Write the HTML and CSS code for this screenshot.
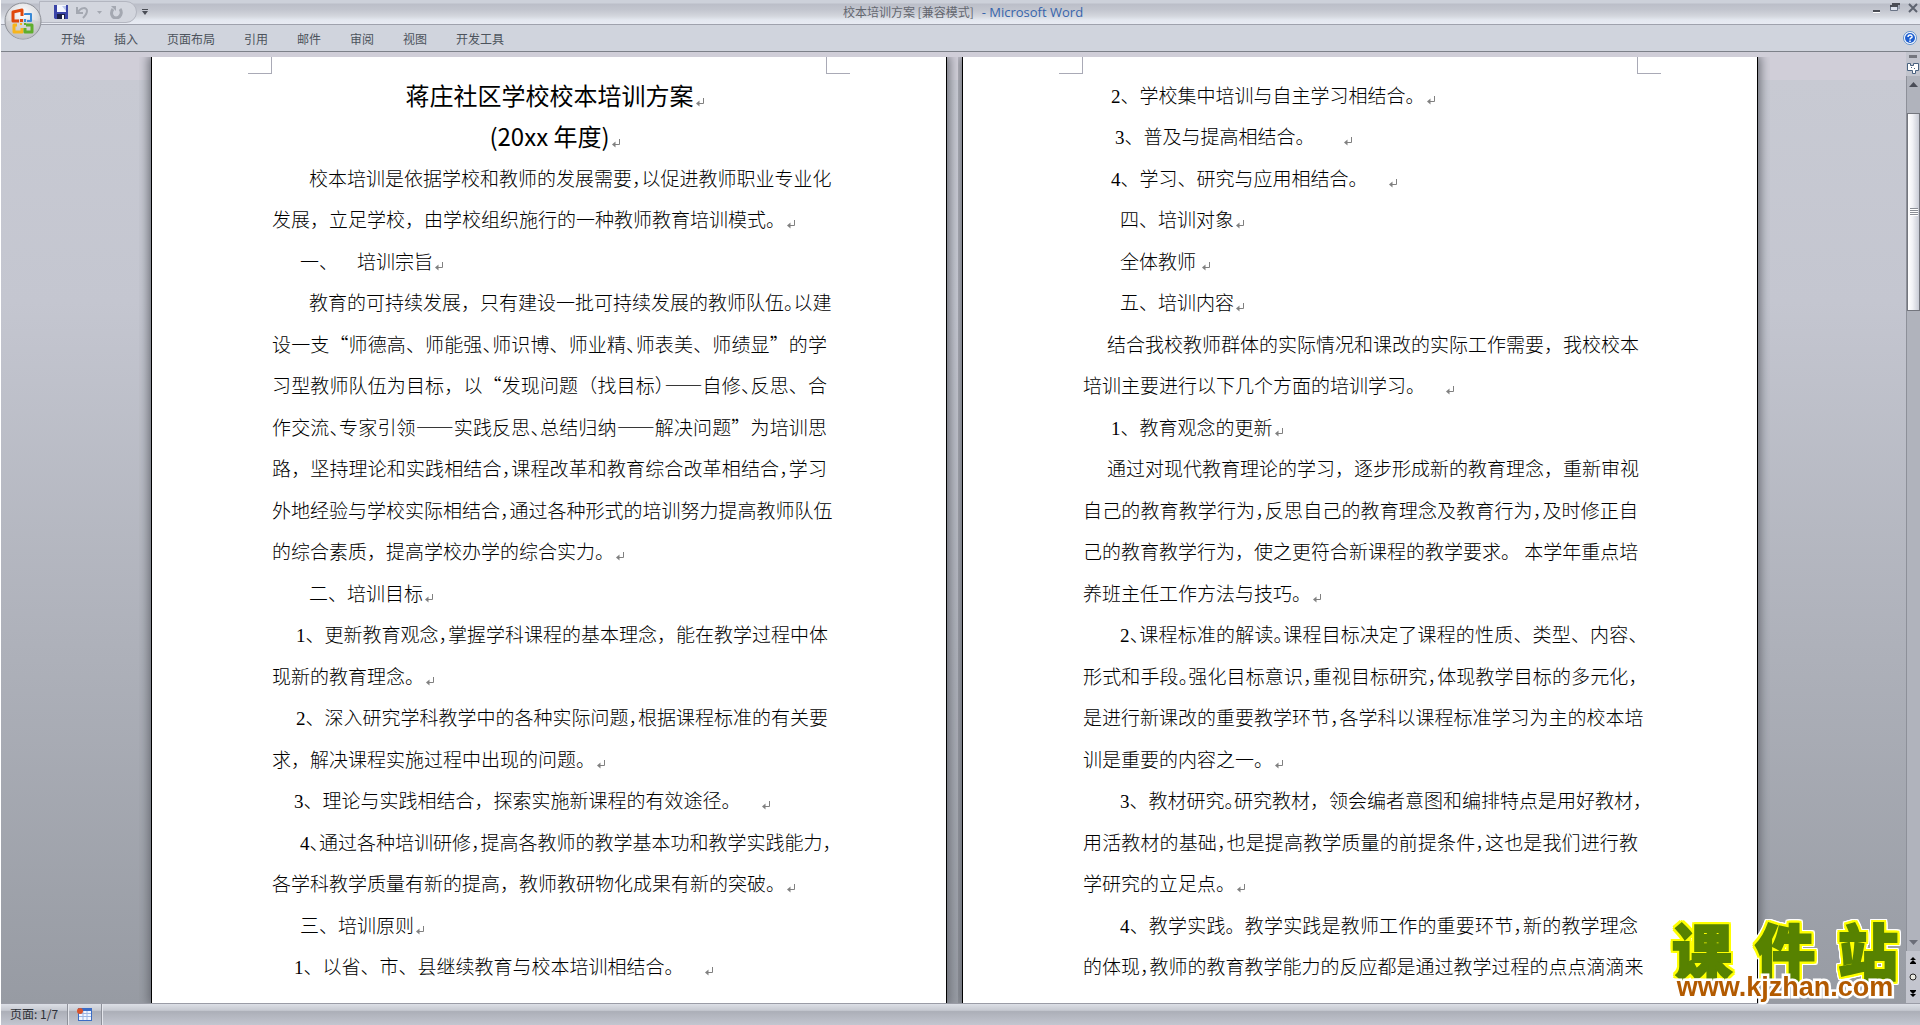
FILE: index.html
```html
<!DOCTYPE html>
<html lang="zh-CN">
<head>
<meta charset="utf-8">
<title>校本培训方案 [兼容模式] - Microsoft Word</title>
<link rel="stylesheet" href="styles.css">
</head>
<body>
<svg class="defs" aria-hidden="true">
  <symbol id="ret" viewBox="0 0 8 9"><path d="M7.500 0v5.500H2" fill="none" stroke="#808080"/><path d="M0 5.500L3.500 2.500v6z" fill="#808080"/></symbol>
</svg>

<header class="titlebar">
  <div class="quick">
    <button aria-label="保存"><svg width="14" height="14" viewBox="0 0 14 14"><path d="M0 0h14v14H1l-1-1z" fill="#3a44a8"/><path d="M3 0h9v7H3z" fill="#f4f7ff"/><path d="M8 1h4v5z" fill="#b9c6ee"/><path d="M3 9h8v5H3z" fill="#1c2047"/><path d="M8 10h2v4H8z" fill="#fff"/></svg></button>
    <button aria-label="撤消"><svg width="13" height="13" viewBox="0 0 13 13"><path d="M1 1v6h6" fill="none" stroke="#a4a8b1" stroke-width="2"/><path d="M2 6c3-5 9-5 9-1 0 3-2 5-4 7" fill="none" stroke="#a4a8b1" stroke-width="2"/></svg></button>
    <button aria-label="撤消列表"><svg width="5" height="3" viewBox="0 0 5 3"><path d="M0 0h5L2.500 3z" fill="#a4a8b1"/></svg></button>
    <button aria-label="重复"><svg width="13" height="13" viewBox="0 0 13 13"><path d="M3 3C0 7 2 12 6 12s7-5 4-9" fill="none" stroke="#a4a8b1" stroke-width="3"/><path d="M1 0h5v5z" fill="#a4a8b1"/></svg></button>
  </div>
  <button class="custom" aria-label="自定义快速访问工具栏"><svg width="6" height="6" viewBox="0 0 6 6"><path d="M0 0h6v1H0zM0 2h6L3 6z" fill="#4a4d55"/></svg></button>
  <h2 class="caption"><span>校本培训方案 [兼容模式]</span><span class="app">- Microsoft Word</span></h2>
  <div class="winbtns">
    <button aria-label="最小化"><svg width="10" height="10" viewBox="0 0 10 10"><path d="M1 7h7v2H1z" fill="#4a4d55"/><path d="M1 9h7v1H1z" fill="#fff"/></svg></button>
    <button aria-label="还原"><svg width="10" height="10" viewBox="0 0 10 10"><path d="M2 1h7v5M.5 3.500h7v4h-7z" fill="#dde3ee" stroke="#6a7486"/><path d="M2 1h8M0 3h8" stroke="#4a4d55" stroke-width="2"/></svg></button>
    <button aria-label="关闭"><svg width="10" height="10" viewBox="0 0 10 10"><path d="M1 1l8 8M9 1L1 9" stroke="#5e6470" stroke-width="2"/></svg></button>
  </div>
</header>
<button class="office" aria-label="Office 按钮"><svg width="38" height="38" viewBox="0 0 38 38">
  <defs><radialGradient id="orb" cx=".5" cy=".3" r=".7"><stop offset="0" stop-color="#fff"/><stop offset=".6" stop-color="#dcdde0"/><stop offset="1" stop-color="#a9abb0"/></radialGradient></defs>
  <circle cx="19" cy="19" r="18" fill="url(#orb)" stroke="#8d9097"/><path d="M2 20c8-4 26-4 34 0a17 17 0 0 1-34 0z" fill="#c9cacd" opacity=".6"/>
  <g fill="none" stroke-width="3" stroke-linejoin="round"><path d="M15 19H9V10l9-2v6" stroke="#e0490d"/><path d="M21 13v-1h6v7h-4" stroke="#3a8ad6" stroke-width="2"/><path d="M13 23h-3v7h8v-4" stroke="#f7b51c"/><path d="M22 23h6v7h-7v-4" stroke="#5fae2c"/></g>
  <path d="M16 17h3v3h-3z" fill="#e0490d"/><path d="M20 17h2v3h-2z" fill="#3a8ad6"/><path d="M16 21h2v2h-2z" fill="#f7b51c"/><path d="M20 21h2v2h-2z" fill="#5fae2c"/>
</svg></button>

<nav class="ribbon">
  <a href="#">开始</a><a href="#">插入</a><a href="#">页面布局</a><a href="#">引用</a><a href="#">邮件</a><a href="#">审阅</a><a href="#">视图</a><a href="#">开发工具</a>
  <button class="help" aria-label="帮助"><svg width="14" height="14" viewBox="0 0 14 14"><circle cx="7" cy="7" r="6.500" fill="#fff" stroke="#5f8fcb"/><circle cx="7" cy="7" r="5" fill="#1f5fd0"/><path d="M5 6c0-3 4.500-2.500 4 0-.3 1-2 1-2 2.500M7 9.500v1.500" fill="none" stroke="#fff" stroke-width="1.500"/></svg></button>
</nav>

<div class="main">
<main class="work">
  <article class="page">
    <i class="crop left"></i><i class="crop right"></i>
    <h1>蒋庄社区学校校本培训方案<svg class="r"><use href="#ret"/></svg></h1>
    <h1>(20xx 年度)<svg class="r"><use href="#ret"/></svg></h1>
    <p class="j in37">校本培训是依据学校和教师的发展需要<i class="h">，</i>以促进教师职业专业化</p>
    <p>发展，立足学校，由学校组织施行的一种教师教育培训模式。<svg class="r"><use href="#ret"/></svg></p>
    <p class="in28">一、　培训宗旨<svg class="r"><use href="#ret"/></svg></p>
    <p class="j in37">教育的可持续发展，只有建设一批可持续发展的教师队伍<i class="h">。</i>以建</p>
    <p class="j">设一支“师德高、师能强<i class="h">、</i>师识博、师业精<i class="h">、</i>师表美、师绩显”的学</p>
    <p class="j">习型教师队伍为目标，以“发现问题（找目标<i class="h">）</i>——自修<i class="h">、</i>反思、合</p>
    <p class="j">作交流<i class="h">、</i>专家引领——实践反思<i class="h">、</i>总结归纳——解决问题”为培训思</p>
    <p class="j">路，坚持理论和实践相结合<i class="h">，</i>课程改革和教育综合改革相结合<i class="h">，</i>学习</p>
    <p class="j">外地经验与学校实际相结合<i class="h">，</i>通过各种形式的培训努力提高教师队伍</p>
    <p>的综合素质，提高学校办学的综合实力。<svg class="r"><use href="#ret"/></svg></p>
    <p class="in37">二、培训目标<svg class="r"><use href="#ret"/></svg></p>
    <p class="j in24"><b>1</b>、更新教育观念<i class="h">，</i>掌握学科课程的基本理念，能在教学过程中体</p>
    <p>现新的教育理念。<svg class="r"><use href="#ret"/></svg></p>
    <p class="j in24"><b>2</b>、深入研究学科教学中的各种实际问题<i class="h">，</i>根据课程标准的有关要</p>
    <p>求，解决课程实施过程中出现的问题。<svg class="r"><use href="#ret"/></svg></p>
    <p class="in22"><b>3</b>、理论与实践相结合，探索实施新课程的有效途径。　<svg class="r"><use href="#ret"/></svg></p>
    <p class="j in28"><b>4</b><i class="h">、</i>通过各种培训研修<i class="h">，</i>提高各教师的教学基本功和教学实践能力<i class="h">，</i></p>
    <p>各学科教学质量有新的提高，教师教研物化成果有新的突破。<svg class="r"><use href="#ret"/></svg></p>
    <p class="in28">三、培训原则<svg class="r"><use href="#ret"/></svg></p>
    <p class="in22"><b>1</b>、以省、市、县继续教育与校本培训相结合。　<svg class="r"><use href="#ret"/></svg></p>
  </article>
  <article class="page">
    <i class="crop left"></i><i class="crop right"></i>
    <p class="in28"><b>2</b>、学校集中培训与自主学习相结合。<svg class="r"><use href="#ret"/></svg></p>
    <p class="in32"><b>3</b>、普及与提高相结合。　  &nbsp;<svg class="r"><use href="#ret"/></svg></p>
    <p class="in28"><b>4</b>、学习、研究与应用相结合。　<svg class="r"><use href="#ret"/></svg></p>
    <p class="in37">四、培训对象<svg class="r"><use href="#ret"/></svg></p>
    <p class="in37">全体教师 <svg class="r"><use href="#ret"/></svg></p>
    <p class="in37">五、培训内容<svg class="r"><use href="#ret"/></svg></p>
    <p class="j in24">结合我校教师群体的实际情况和课改的实际工作需要，我校校本</p>
    <p>培训主要进行以下几个方面的培训学习。　<svg class="r"><use href="#ret"/></svg></p>
    <p class="in28"><b>1</b>、教育观念的更新<svg class="r"><use href="#ret"/></svg></p>
    <p class="j in24">通过对现代教育理论的学习，逐步形成新的教育理念，重新审视</p>
    <p class="j">自己的教育教学行为<i class="h">，</i>反思自己的教育理念及教育行为<i class="h">，</i>及时修正自</p>
    <p class="j">己的教育教学行为，使之更符合新课程的教学要求。 本学年重点培</p>
    <p>养班主任工作方法与技巧。<svg class="r"><use href="#ret"/></svg></p>
    <p class="j in37"><b>2</b><i class="h">、</i>课程标准的解读<i class="h">。</i>课程目标决定了课程的性质、类型、内容<i class="h">、</i></p>
    <p class="j">形式和手段<i class="h">。</i>强化目标意识<i class="h">，</i>重视目标研究<i class="h">，</i>体现教学目标的多元化<i class="h">，</i></p>
    <p class="j">是进行新课改的重要教学环节<i class="h">，</i>各学科以课程标准学习为主的校本培</p>
    <p>训是重要的内容之一。<svg class="r"><use href="#ret"/></svg></p>
    <p class="j in37"><b>3</b>、教材研究<i class="h">。</i>研究教材，领会编者意图和编排特点是用好教材<i class="h">，</i></p>
    <p class="j">用活教材的基础<i class="h">，</i>也是提高教学质量的前提条件<i class="h">，</i>这也是我们进行教</p>
    <p>学研究的立足点。<svg class="r"><use href="#ret"/></svg></p>
    <p class="j in37"><b>4</b>、教学实践。教学实践是教师工作的重要环节<i class="h">，</i>新的教学理念</p>
    <p class="j">的体现<i class="h">，</i>教师的教育教学能力的反应都是通过教学过程的点点滴滴来</p>
  </article>
</main>
<aside class="scroll">
  <i class="split"></i>
  <button aria-label="标尺"><svg width="12" height="12" viewBox="0 0 12 12"><path d="M.5 1.500h3v2h3v-2h5v7h-3v3h-3v-3h-5z" fill="#fff" stroke="#4a6280"/><path d="M4 5h1v1H4zM7 6h1v1H7z" fill="#4a6280"/></svg></button>
  <div class="track">
    <svg width="9" height="5" viewBox="0 0 9 5"><path d="M0 5h9L4.500 0z" fill="#4a4d57"/></svg>
    <div class="thumb"></div>
    <svg width="9" height="5" viewBox="0 0 9 5"><path d="M0 0h9L4.500 5z" fill="#6a6d77"/></svg>
  </div>
  <div class="browse">
    <button aria-label="前一页"><svg width="6" height="7" viewBox="0 0 6 7"><path d="M3 0l3 3H0zM3 3l3 3H0zM0 6h6v1H0z"/></svg></button>
    <button aria-label="选择浏览对象"><svg width="8" height="8" viewBox="0 0 8 8"><circle cx="4" cy="4" r="3" fill="#e8e8e0" stroke="#222"/></svg></button>
    <button aria-label="下一页"><svg width="6" height="7" viewBox="0 0 6 7"><path d="M0 0h6v1H0zM0 1h6L3 4zM0 4h6L3 7z"/></svg></button>
  </div>
</aside>
</div>

<footer class="status">
  <span class="cell">页面: 1/7</span>
  <button class="cell" aria-label="录制宏"><svg width="15" height="13" viewBox="0 0 15 13"><path d="M1 0h14v13H1z" fill="#3c6cc4"/><path d="M2 3h12v9H2z" fill="#f3f7ff"/><path d="M2 5.500h12M2 8.500h12M6 3v9M10 3v9" stroke="#9db7e4"/><circle cx="3" cy="3" r="3" fill="#d9532c"/></svg></button>
</footer>

<div class="mark">
  <div class="name"><span>课</span><span>件</span><span>站</span></div>
  <div class="url">www.kjzhan.com</div>
</div>
</body>
</html>
```
FILE: styles.css
```css
* { box-sizing: border-box; }
body {
  margin: 0;
  height: 100vh;
  display: flex;
  flex-direction: column;
  overflow: hidden;
  border-left: 1px solid #fff;
  background: #d0d4dd;
  font-family: "Noto Sans CJK SC", sans-serif;
  font-size: 12px;
  color: #4c535c;
}
button { border: 0; padding: 0; background: none; display: block; }
svg { display: block; }
i { font-style: normal; }
.defs { position: absolute; width: 0; height: 0; }

/* title bar */
.titlebar {
  flex: none;
  height: 25px;
  display: flex;
  align-items: flex-start;
  border-bottom: 1px solid #9fa2ad;
  background: linear-gradient(#cdd1da 0 3px, #bbbec8 4px, #c3c6cf 10px, #d3d6dd 16px, #e4e8f0 20px, #e8ebf3);
}
.quick {
  display: flex;
  align-items: center;
  gap: 8px;
  width: 98px;
  height: 22px;
  margin: 1px 0 0 38px;
  padding: 0 14px;
  border: 1px solid #b3b6c0;
  border-radius: 0 12px 12px 0;
  background: #d3d6de;
}
.custom { margin: 9px 0 0 5px; }
.caption {
  flex: 1;
  display: flex;
  justify-content: center;
  gap: 8px;
  margin: 0;
  font-size: 12px;
  font-weight: 400;
  line-height: 24px;
  color: #63666f;
}
.app { font-family: "Open Sans", sans-serif; font-size: 13px; color: #3765ac; }
.winbtns { display: flex; gap: 8px; width: 142px; justify-content: flex-end; padding: 3px 2px 0 0; }
.office { position: absolute; left: 4px; top: 2px; z-index: 2; }

/* ribbon tabs */
.ribbon {
  flex: none;
  height: 27px;
  display: flex;
  align-items: center;
  gap: 29px;
  padding: 0 3px 0 60px;
  border-bottom: 1px solid #7d8189;
}
.ribbon a { color: #4c535c; text-decoration: none; }
.help { margin-left: auto; }

/* workspace */
.main { flex: 1; min-height: 0; display: flex; background: linear-gradient(#d0ced8 0 28px, #c8cad3 28px, #c4c6d0 250px, #979ba3); }
.work { flex: 1; min-width: 0; display: flex; justify-content: center; overflow: hidden; padding: 5px 0 0 2px; gap: 15px; }
.page {
  position: relative;
  flex: none;
  width: 796px;
  padding: 17px 119px 96px 120px;
  border: solid #000;
  border-width: 0 1px;
  background: #fff;
  box-shadow: 0 0 10px 2px #63666e;
  clip-path: inset(0 -12px 0 -12px);
  color: #000;
}
.page + .page { clip-path: inset(0 -12px 0 -4px); }
.crop { position: absolute; top: 0; width: 24px; height: 17px; border: 0 solid #a9aab6; border-bottom-width: 1px; }
.left { left: 96px; border-right-width: 1px; }
.right { right: 96px; border-left-width: 1px; }

.page p, .page h1 {
  margin: 0;
  line-height: 42px;
  font-size: 19px;
  font-weight: 300;
  white-space: nowrap;
  text-spacing-trim: space-all;
}
.page > :nth-child(odd) { line-height: 41px; }
.page h1 { padding-left: 10px; font-size: 24px; font-weight: 400; text-align: center; }
.page .j { text-align: justify; text-align-last: justify; }
.page b { font-family: "Liberation Serif", serif; font-weight: 400; line-height: 1; }
.in22 { padding-left: 22px; }
.in24 { padding-left: 24px; }
.in28 { padding-left: 28px; }
.in32 { padding-left: 32px; }
.in37 { padding-left: 37px; }

/* half-width punctuation on a full line */
.h { font-feature-settings: "halt"; }
.r { display: inline-block; width: 8px; height: 9px; margin-left: 2px; vertical-align: -2px; }

/* vertical scroll bar */
.scroll { flex: none; width: 14px; display: flex; flex-direction: column; align-items: center; background: #c3c5ce; }
.split { width: 8px; height: 3px; margin: 3px 0 4px; background: #74767e; }
.track {
  flex: 1;
  align-self: stretch;
  display: flex;
  flex-direction: column;
  align-items: center;
  margin-top: 2px;
  padding: 6px 0;
  border-left: 1px solid #8d9099;
  background: #b0b3bc;
}
.thumb {
  width: 100%;
  height: 23%;
  margin: 26px 0 auto;
  border: 1px solid #74767e;
  background:
    repeating-linear-gradient(#8a8d95 0 1px, #fff 1px 2px) center / 8px 8px no-repeat,
    linear-gradient(90deg, #fff, #f2f2f6 40%, #c9ccd6);
}
.browse { display: flex; flex-direction: column; align-items: center; gap: 9px; padding: 6px 0; }

/* status bar */
.status {
  flex: none;
  height: 22px;
  display: flex;
  border-top: 1px solid #9a9ca6;
  background: linear-gradient(#dcdfe6, #c6c9d1 30%, #acafb8 36%, #c3c6d0);
  color: #2e3138;
}
.cell { padding: 0 9px; border-right: 1px solid #8e919a; line-height: 20px; box-shadow: 1px 0 #e4e6ec; }

/* site mark over the document */
.mark { position: fixed; right: 22px; bottom: 23px; width: 226px; }
.name {
  display: flex;
  justify-content: space-between;
  font-size: 60px;
  font-weight: 900;
  line-height: 46px;
  color: #578200;
  -webkit-text-stroke: 2px #578200;
  filter: drop-shadow(2px 0 #ff0) drop-shadow(-2px 0 #ff0) drop-shadow(0 2px #ff0) drop-shadow(0 -2px #ff0)
    drop-shadow(1px 0 #fff) drop-shadow(-1px 0 #fff) drop-shadow(0 1px #fff) drop-shadow(0 -1px #fff);
}
.url {
  position: relative;
  font: bold 27px/30px "Liberation Sans", sans-serif;
  color: #b25a00;
  text-align: center;
  white-space: nowrap;
  paint-order: stroke fill;
  -webkit-text-stroke: 5px #fff;
}
```
